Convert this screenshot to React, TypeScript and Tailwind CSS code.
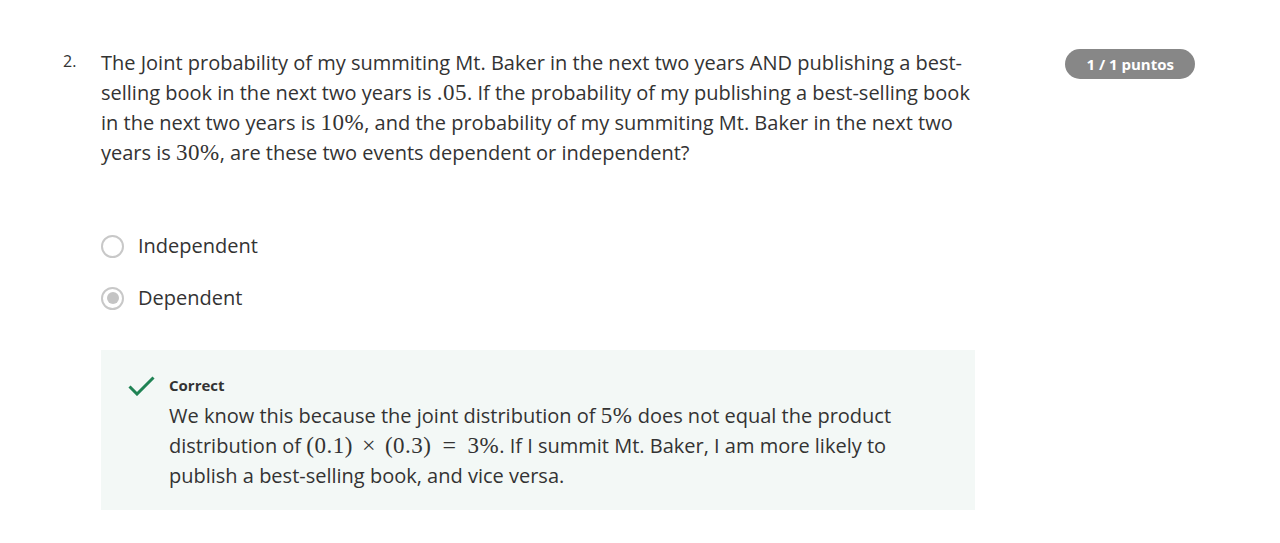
import React from "react";

const M = ({ children }: { children: React.ReactNode }) => (
  <span className="font-['Liberation_Serif',serif] text-[23px] leading-none tracking-[0.5px]">{children}</span>
);

export default function App() {
  return (
    <div className="w-[1280px] h-[543px] bg-white font-['Open_Sans',sans-serif] text-[#333333]">
      <div className="flex pl-[63px] pr-[85px] pt-[48px]">
        <div className="w-[38px] shrink-0 text-[16px] leading-[30px] pt-0 -mt-[2px]">2.</div>
        <div className="w-[874px] shrink-0">
          <p className="text-[20px] leading-[30px]">
            The Joint probability of my summiting Mt. Baker in the next two years AND publishing a best-selling book in the
            next two years is <M>.05</M>. If the probability of my publishing a best-selling book in the next two years is{" "}
            <M>10%</M>, and the probability of my summiting Mt. Baker in the next two years is <M>30%</M>, are these two
            events dependent or independent?
          </p>

          <div className="mt-[63px] flex flex-col gap-[22px]">
            <label className="flex items-center h-[30px]">
              <span className="w-[23px] h-[23px] rounded-full border-2 border-[#c8c8c8] bg-white shrink-0" />
              <span className="ml-[14px] text-[20px] leading-[30px]">Independent</span>
            </label>
            <label className="flex items-center h-[30px]">
              <span className="w-[23px] h-[23px] rounded-full border-2 border-[#c8c8c8] bg-white shrink-0 flex items-center justify-center">
                <span className="w-[12px] h-[12px] rounded-full bg-[#c4c4c4]" />
              </span>
              <span className="ml-[14px] text-[20px] leading-[30px]">Dependent</span>
            </label>
          </div>

          <div className="mt-[37px] bg-[#f3f8f6] flex pt-[25px] pb-[19px] pr-[68px]">
            <div className="w-[68px] shrink-0 flex justify-end pr-[14px] pt-[1px]">
              <svg width="27" height="20" viewBox="0 0 27 20" fill="none">
                <path d="M1.5 10.5 L9 18 L25.5 1.5" stroke="#1f8354" strokeWidth="3" />
              </svg>
            </div>
            <div>
              <div className="text-[15px] leading-[20px] font-bold text-[#333333]">Correct</div>
              <p className="mt-[6px] text-[20px] leading-[30px]">
                We know this because the joint distribution of <M>5%</M> does not equal the product distribution of{" "}
                <M>
                  (0.1)<span className="mx-[9px] text-[24px]">×</span>(0.3)<span className="mx-[11px] text-[24px]">=</span>3%
                </M>
                . If I summit Mt. Baker, I am more likely to publish a best-selling book, and vice versa.
              </p>
            </div>
          </div>
        </div>
        <div className="flex-1 flex justify-end">
          <div className="h-[30px] mt-[1px] px-[21px] rounded-full bg-[#878787] text-white text-[15px] font-bold leading-[30px] whitespace-nowrap">
            1 / 1 puntos
          </div>
        </div>
      </div>
    </div>
  );
}
